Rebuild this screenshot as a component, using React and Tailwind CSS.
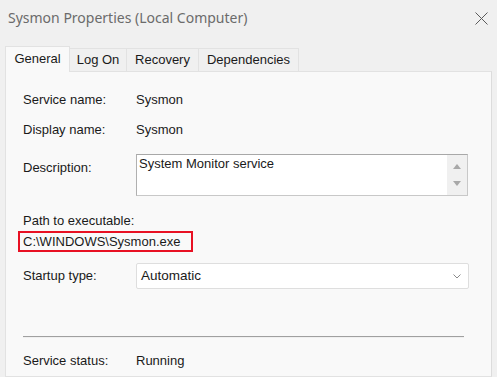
import React from "react";

const body = { fontFamily: '"Liberation Sans", Arial, sans-serif' };

function Tab({ label, selected, w }) {
  if (selected) {
    return (
      <div
        className="h-[26px] flex items-center justify-center bg-[#f9f9f9] border border-b-0 border-[#e2e2e2] text-[13px] text-[#1a1a1a] relative z-10 -mb-px pb-[1px]"
        style={{ width: w }}
      >
        {label}
      </div>
    );
  }
  return (
    <div
      className="h-[23px] flex items-center justify-center bg-[#f0f0f0] border border-b-0 border-l-0 border-[#e2e2e2] text-[13px] text-[#1a1a1a]"
      style={{ width: w }}
    >
      {label}
    </div>
  );
}

export default function App() {
  return (
    <div
      className="w-[497px] h-[377px] bg-[#f0f0f0] overflow-hidden flex flex-col"
      style={body}
    >
      {/* Title bar */}
      <div className="h-[35px] shrink-0 flex items-center justify-between pl-[8px] pr-[9px]">
        <span
          className="text-[14px] text-[#6b6b6b] leading-none"
          style={{ fontFamily: '"Segoe UI", "Noto Sans", sans-serif' }}
        >
          Sysmon Properties (Local Computer)
        </span>
        <svg width="13" height="13" viewBox="0 0 13 13" className="mt-[2px]">
          <path d="M0.5 0.5 L12.5 12.5 M12.5 0.5 L0.5 12.5" stroke="#5a5a5a" strokeWidth="1" fill="none" />
        </svg>
      </div>

      {/* Tabs */}
      <div className="mt-[10px] ml-[5px] flex items-end h-[26px] shrink-0">
        <Tab label="General" selected w={65} />
        <Tab label="Log On" w={57} />
        <Tab label="Recovery" w={72} />
        <Tab label="Dependencies" w={100} />
      </div>

      {/* Panel */}
      <div className="mx-[5px] flex-1 bg-[#f9f9f9] border border-[#e2e2e2] border-r-[#dcdcdc] pl-[17px] text-[13px] text-[#1a1a1a]">
        <div className="mt-[20px] h-[16px] leading-[16px] flex">
          <span className="w-[113px]">Service name:</span>
          <span>Sysmon</span>
        </div>
        <div className="mt-[14px] h-[16px] leading-[16px] flex">
          <span className="w-[113px]">Display name:</span>
          <span>Sysmon</span>
        </div>
        <div className="mt-[16px] flex items-start">
          <span className="w-[113px] mt-[6px] leading-[16px]">Description:</span>
          <div className="w-[332px] h-[42px] bg-white border border-[#c8c8c8] border-t-[#a8a8a8] border-l-[#b0b0b0] flex">
            <div className="flex-1 pl-[2px] pt-[1px] leading-[16px]">System Monitor service</div>
            <div className="w-[20px] bg-[#f0f0f0] flex flex-col items-center justify-between py-[9px]">
              <svg width="8" height="5" viewBox="0 0 8 5">
                <path d="M0 5 L4 0 L8 5 Z" fill="#a8a8a8" />
              </svg>
              <svg width="8" height="5" viewBox="0 0 8 5">
                <path d="M0 0 L4 5 L8 0 Z" fill="#a8a8a8" />
              </svg>
            </div>
          </div>
        </div>
        <div className="mt-[17px] h-[16px] leading-[16px]">Path to executable:</div>
        <div className="mt-[2px] -ml-[5px] w-[175px] h-[21px] border-2 border-[#e81123] flex items-center pl-[3px]">
          C:\WINDOWS\Sysmon.exe
        </div>
        <div className="mt-[11px] flex items-center">
          <span className="w-[113px] leading-[16px]">Startup type:</span>
          <div className="w-[333px] h-[26px] bg-white border border-[#dedede] rounded-[2px] flex items-center justify-between pl-[4px] pr-[7px] text-[13.5px]">
            <span>Automatic</span>
            <svg width="8" height="5" viewBox="0 0 8 5">
              <path d="M0.5 0.5 L4 4 L7.5 0.5" stroke="#8a8a8a" strokeWidth="1" fill="none" />
            </svg>
          </div>
        </div>
        <div className="mt-[47px] w-[441px] h-[2px] bg-[#a0a0a0] border-b border-[#f0f0f0]"></div>
        <div className="mt-[15px] h-[16px] leading-[16px] flex">
          <span className="w-[113px]">Service status:</span>
          <span>Running</span>
        </div>
      </div>
    </div>
  );
}
